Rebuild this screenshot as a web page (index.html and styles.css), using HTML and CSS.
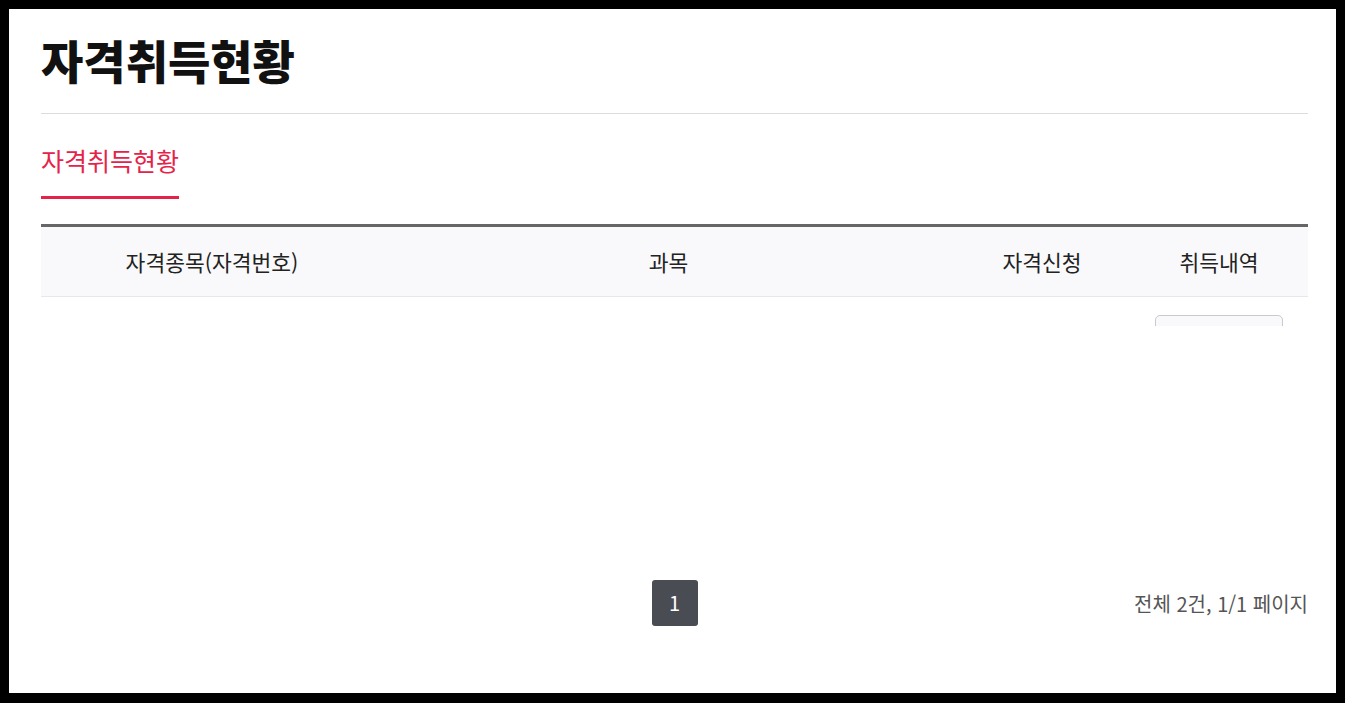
FILE: index.html
```html
<!DOCTYPE html>
<html lang="ko">
  <head>
    <meta charset="utf-8">
    <title>자격취득현황</title>
<link rel="stylesheet" href="styles.css">
  </head>
  <body>
    <div class="screen">
      <h1 class="page-title">자격취득현황</h1>

      <ul class="tabs">
        <li class="tab active">자격취득현황</li>
      </ul>

      <div class="table-wrap">
        <table class="list">
          <colgroup>
            <col class="c-name">
            <col class="c-subject">
            <col class="c-apply">
            <col class="c-history">
          </colgroup>
          <thead>
            <tr>
              <th>자격종목(자격번호)</th>
              <th>과목</th>
              <th>자격신청</th>
              <th>취득내역</th>
            </tr>
          </thead>
          <tbody>
            <tr>
              <td></td>
              <td></td>
              <td></td>
              <td><button type="button" class="btn-line" aria-label="취득내역"></button></td>
            </tr>
          </tbody>
        </table>
      </div>

      <div class="pager">
        <div class="pages">
          <a class="page current" href="#">1</a>
        </div>
        <p class="summary">전체 2건, 1/1 페이지</p>
      </div>
    </div>
  </body>
</html>
```

FILE: styles.css
```css
/* Black frame around the captured window */
html {
  background: #000;
}

body {
  margin: 0;
  font-family: "Noto Sans CJK KR", "Noto Sans", sans-serif;
  color: #222;
}

.screen {
  margin: 9px 9px 10px 9px;
  height: 684px;
  background: #fff;
  padding: 0 28px 0 32px;
  box-sizing: border-box;
  display: flex;
  flex-direction: column;
}

/* Page title */
.page-title {
  margin: 0;
  padding: 22px 0 26px;
  font-size: 46px;
  line-height: 56px;
  font-weight: 900;
  color: #111;
  border-bottom: 1px solid #dcdcdf;
}

/* Tabs */
.tabs {
  list-style: none;
  margin: 0;
  padding: 0;
  display: flex;
}

.tab {
  padding: 28px 0 18px;
  font-size: 25px;
  line-height: 36px;
  color: #222;
  border-bottom: 3px solid transparent;
}

.tab.active {
  color: #e5234a;
  border-bottom-color: #e5234a;
}

/* List table */
.table-wrap {
  margin-top: 25px;
  height: 102px;
  overflow: hidden;
}

.list {
  width: 100%;
  border-collapse: collapse;
  table-layout: fixed;
  border-top: 3px solid #666;
}

.c-name { width: 342px; }
.c-apply { width: 176px; }
.c-history { width: 178px; }

.list th {
  height: 69px;
  padding: 0;
  font-size: 21.5px;
  font-weight: 400;
  color: #222;
  background: #f9f9fb;
  border-bottom: 1px solid #e8e8ec;
}

.list td {
  padding: 18px 0;
  text-align: center;
}

.btn-line {
  display: block;
  margin: 0 auto;
  width: 128px;
  height: 40px;
  border: 1px solid #c9c9cf;
  border-radius: 5px;
  background: #f9f9fb;
}

/* Paging */
.pager {
  margin-top: auto;
  margin-bottom: 67px;
  position: relative;
  display: flex;
  justify-content: center;
  align-items: center;
}

.page {
  display: block;
  width: 46px;
  height: 46px;
  line-height: 46px;
  text-align: center;
  font-size: 20px;
  color: #fff;
  text-decoration: none;
  border-radius: 3px;
  background: #4a4c54;
}

.summary {
  position: absolute;
  right: 0;
  top: 50%;
  transform: translateY(-50%);
  margin: 0;
  font-size: 20px;
  color: #555;
}
```
